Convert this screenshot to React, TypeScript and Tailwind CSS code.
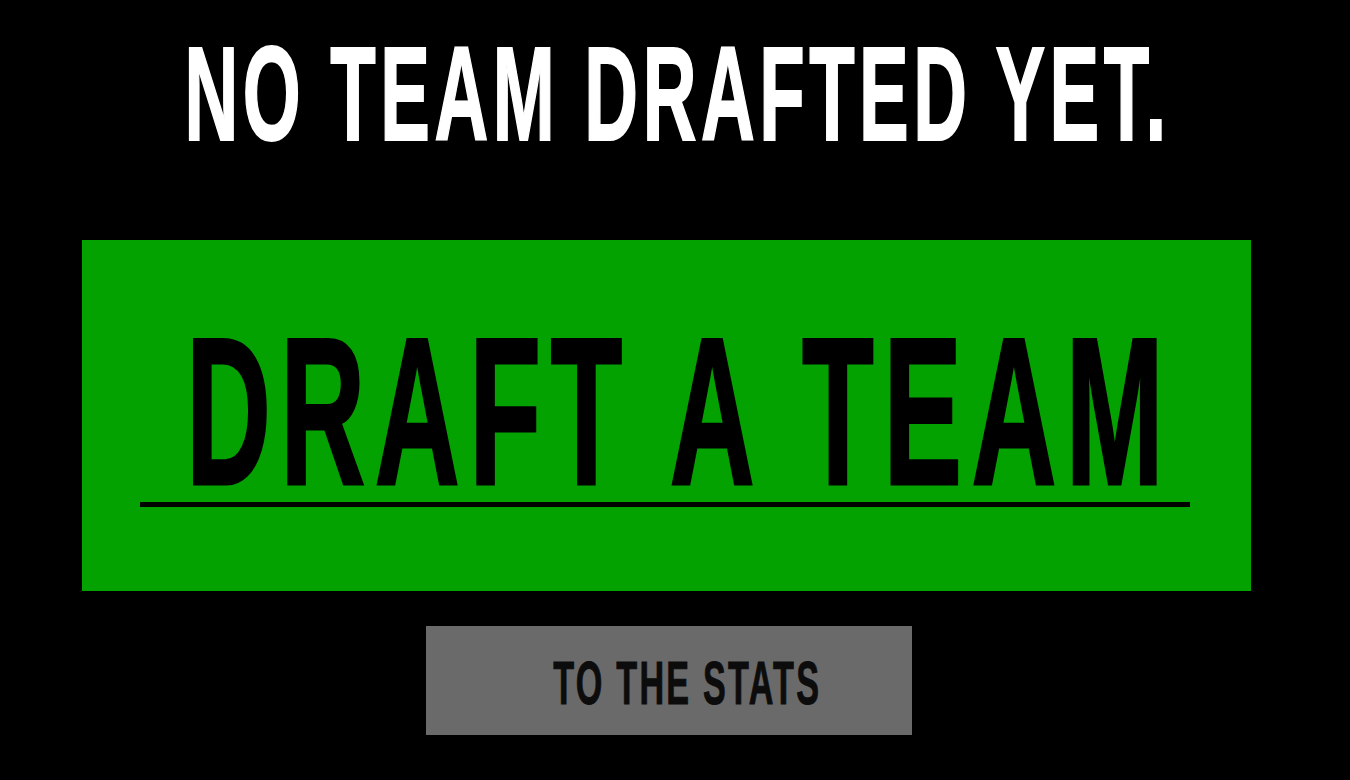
const condensed = { fontFamily: '"Liberation Sans", Arial, sans-serif' };

export default function App() {
  return (
    <div className="min-h-screen w-full overflow-hidden bg-black" style={condensed}>
      <div className="pt-[28px] flex justify-center pl-[4px]">
        <h1 className="inline-block whitespace-nowrap text-[133px] leading-none font-bold tracking-[8px] text-white [-webkit-text-stroke:2px_white] scale-x-[0.56]">
          NO TEAM DRAFTED YET.
        </h1>
      </div>

      <div className="mt-[79px] ml-[82px] w-[1169px] h-[351px] bg-[#03a200] pt-[81px]">
        <div className="ml-[58px] w-[1050px] border-b-[5px] border-black flex justify-center pl-[30px]">
          <span className="inline-block whitespace-nowrap text-[210px] leading-[181px] font-bold tracking-[17px] text-black [-webkit-text-stroke:3px_black] scale-x-[0.56]">
            DRAFT A TEAM
          </span>
        </div>
      </div>

      <button className="mt-[35px] ml-[426px] w-[486px] h-[109px] bg-[#6a6a6a] flex justify-center items-start pt-[27px] pl-[36px]">
        <span className="inline-block whitespace-nowrap text-[61px] leading-none font-bold tracking-[4px] text-[#0c0c0c] [-webkit-text-stroke:1px_#0c0c0c] scale-x-[0.56]">
          TO THE STATS
        </span>
      </button>
    </div>
  );
}
